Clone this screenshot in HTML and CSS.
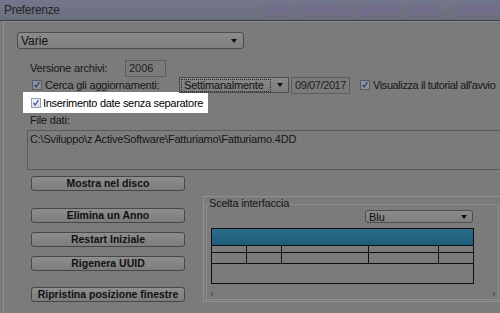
FILE: index.html
```html
<!DOCTYPE html>
<html lang="it">
<head>
<meta charset="utf-8">
<title>Preferenze</title>
<link rel="stylesheet" href="styles.css">
</head>
<body>
<div class="window">
  <div class="titlebar">
    <span class="title">Preferenze</span>
    <div class="blurs">
      <i class="blob b1"></i><i class="blob b2"></i><i class="blob b3"></i><i class="blob b4"></i><i class="blob b5"></i>
    </div>
  </div>
  <div class="panel">
    <div class="select select-main"><span>Varie</span><i class="caret"></i></div>

    <div class="row row-version">
      <span class="label label-version">Versione archivi:</span>
      <span class="field field-year">2006</span>
    </div>

    <div class="row row-update">
      <span class="check"><svg viewBox="0 0 10 10"><path d="M2 5 L4 7.5 L8 1.5" /></svg></span>
      <span class="label label-update">Cerca gli aggiornamenti:</span>
      <span class="combo"><span class="combo-text"><span class="focus">Settimanalmente</span></span><span class="combo-btn"><i class="caret"></i></span></span>
      <span class="field field-date">09/07/2017</span>
      <span class="check check-tutorial"><svg viewBox="0 0 10 10"><path d="M2 5 L4 7.5 L8 1.5" /></svg></span>
      <span class="label label-tutorial">Visualizza il tutorial all'avvio</span>
    </div>

    <div class="highlight">
      <span class="check check-on"><svg viewBox="0 0 10 10"><path d="M2 5 L4 7.5 L8 1.5" /></svg></span>
      <span class="label label-hl">Inserimento date senza separatore</span>
    </div>

    <div class="label file-label">File dati:</div>
    <div class="filebox">C:\Sviluppo\z ActiveSoftware\Fatturiamo\Fatturiamo.4DD</div>

    <div class="bottom">
      <div class="buttons">
        <div class="btn btn-show">Mostra nel disco</div>
        <div class="btn btn-del">Elimina un Anno</div>
        <div class="btn btn-restart">Restart Iniziale</div>
        <div class="btn btn-uuid">Rigenera UUID</div>
        <div class="btn btn-reset">Ripristina posizione finestre</div>
      </div>
      <div class="outer">
        <div class="group">
          <span class="group-title">Scelta interfaccia</span>
          <div class="select select-theme"><span>Blu</span><i class="caret"></i></div>
          <div class="preview">
            <div class="preview-head"></div>
            <div class="preview-row r1"><i></i><i></i><i></i><i></i><i></i></div>
            <div class="preview-row r2"><i></i><i></i><i></i><i></i><i></i></div>
            <div class="preview-body"></div>
          </div>
          <div class="scroll">
            <i class="arrow-left"></i><i class="arrow-right"></i>
          </div>
        </div>
      </div>
    </div>
  </div>
</div>
</body>
</html>
```
FILE: styles.css
```css
* { box-sizing: border-box; }

html, body {
  margin: 0;
  padding: 0;
}

body {
  width: 500px;
  height: 313px;
  overflow: hidden;
  background: #7b7b7b;
  font-family: "Liberation Sans", Arial, sans-serif;
  font-size: 11px;
  color: #161616;
}

.window {
  width: 500px;
  height: 313px;
  overflow: hidden;
}

/* title bar */
.titlebar {
  height: 21px;
  display: flex;
  align-items: center;
  padding-left: 4px;
  background: linear-gradient(#72768a, #6b6f7d);
  border-bottom: 1px solid #3e3f46;
}

.title {
  font-size: 12px;
  color: #262626;
  letter-spacing: -0.3px;
}

.blurs {
  display: flex;
  align-items: center;
  margin-left: 205px;
}

.blob {
  display: block;
  height: 7px;
  border-radius: 4px;
  background: #7a6696;
  filter: blur(2px);
  opacity: 0.6;
}
.b1 { width: 22px; }
.b2 { width: 48px; margin-left: 14px; }
.b3 { width: 42px; margin-left: 8px; }
.b4 { width: 28px; margin-left: 10px; }
.b5 { width: 50px; margin-left: 20px; }

/* panel */
.panel {
  margin-left: 3px;
  height: 292px;
  border-left: 1px solid #8f8f8f;
  border-top: 1px solid #8c8c8c;
}

.select {
  display: flex;
  align-items: center;
  justify-content: space-between;
  border: 1px solid #4d4d4d;
  border-radius: 3px;
  background: linear-gradient(#8b8b8b, #7f7f7f);
  padding: 0 6px 0 3px;
  color: #111;
}

.caret {
  display: block;
  width: 0;
  height: 0;
  border-left: 3.5px solid transparent;
  border-right: 3.5px solid transparent;
  border-top: 4px solid #111;
}

.select-main {
  margin: 10px 0 0 13px;
  width: 227px;
  height: 17px;
  font-size: 12px;
}

.row {
  display: flex;
  align-items: center;
  height: 16px;
}

.label {
  white-space: nowrap;
  letter-spacing: -0.2px;
}

.row-version {
  margin-top: 11px;
  padding-left: 26px;
}

.label-version { width: 95px; flex: none; }

.field {
  display: flex;
  align-items: center;
  height: 17px;
  border: 1px solid #5d5d5d;
  padding-left: 3px;
  color: #1e1e1e;
  flex: none;
  white-space: nowrap;
}

.field-year { width: 41px; }

.row-update {
  margin-top: 1px;
  padding-left: 28px;
}

.check {
  display: block;
  width: 10px;
  height: 10px;
  border: 1px solid #545a68;
  background: #8d9099;
  flex: none;
}
.check svg {
  display: block;
  width: 8px;
  height: 8px;
}
.check path {
  fill: none;
  stroke: #2d3f78;
  stroke-width: 1.6;
}

.label-update {
  margin-left: 3px;
  width: 134px;
  flex: none;
}

.combo {
  display: flex;
  width: 110px;
  height: 16px;
  border: 1px solid #4d4d4d;
  background: linear-gradient(#888, #7d7d7d);
  flex: none;
}
.combo-text {
  flex: 1;
  display: flex;
  align-items: center;
  padding-left: 1px;
}
.focus {
  display: block;
  width: 90px;
  border: 1px dotted #2b2b2b;
  line-height: 11px;
  padding-left: 2px;
  color: #111;
  letter-spacing: -0.2px;
}
.combo-btn {
  width: 17px;
  display: flex;
  align-items: center;
  justify-content: center;
}

.field-date {
  margin-left: 2px;
  width: 59px;
  padding-left: 3px;
  letter-spacing: -0.4px;
}

.check-tutorial { margin-left: 10px; }

.label-tutorial { margin-left: 3px; letter-spacing: -0.4px; }

.highlight {
  display: flex;
  align-items: center;
  margin: -1px 0 0 19px;
  width: 185px;
  height: 21px;
  background: #ffffff;
  padding-left: 8px;
  color: #000;
}

.check-on {
  border-color: #8fa0c4;
  background: linear-gradient(#f2f2f2, #dcdcdc);
}
.check-on path { stroke: #3a52b4; }

.label-hl { margin-left: 2px; letter-spacing: -0.3px; }

.file-label {
  margin-left: 26px;
  height: 17px;
  line-height: 15px;
}

.filebox {
  margin-left: 23px;
  width: 480px;
  height: 40px;
  border: 1px solid #5b5b5b;
  padding: 1px 2px;
  line-height: 14px;
  white-space: nowrap;
  letter-spacing: -0.2px;
}

/* bottom area */
.bottom {
  display: flex;
  align-items: flex-start;
}

.buttons {
  margin-left: 27px;
  padding-top: 6px;
  display: flex;
  flex-direction: column;
  width: 154px;
  flex: none;
}

.btn {
  height: 15px;
  border: 1px solid #474747;
  border-radius: 3px;
  background: linear-gradient(#8e8e8e, #7c7c7c);
  font-weight: bold;
  font-size: 10.5px;
  line-height: 13px;
  text-align: center;
  color: #111;
}
.btn-del { margin-top: 17px; }
.btn-restart { margin-top: 9px; }
.btn-uuid { margin-top: 9px; }
.btn-reset { margin-top: 16px; }

.outer {
  margin: 26px 0 0 18px;
  width: 300px;
  height: 106px;
  border: 1px solid #909090;
  flex: none;
}

.group {
  margin: 7px 0 0 2px;
  width: 293px;
  height: 96px;
  border: 1px solid #8c8c8c;
  display: flex;
  flex-direction: column;
  align-items: flex-start;
}

.group-title {
  display: block;
  margin: -8px 0 0 2px;
  padding: 0 1px 0 0;
  background: #7b7b7b;
  line-height: 13px;
  letter-spacing: -0.2px;
  white-space: nowrap;
}

.select-theme {
  margin-left: 158px;
  width: 108px;
  height: 13px;
  font-size: 11px;
  padding-right: 5px;
}

.preview {
  margin: 5px 0 0 4px;
  width: 263px;
  height: 56px;
  border: 1px solid #111;
}

.preview-head {
  height: 16px;
  background: linear-gradient(#2a6d8a, #1d5c78);
}

.preview-row {
  display: grid;
  grid-template-columns: 35px 35px 87px 70px 1fr;
  border-top: 1px solid #111;
}
.preview-row i { border-right: 1px solid #111; }
.preview-row i:last-child { border-right: none; }
.r1 { height: 7px; }
.r2 { height: 11px; }

.preview-body {
  height: 19px;
  border-top: 1px solid #111;
}

.scroll {
  margin-top: 6px;
  align-self: stretch;
  height: 7px;
  display: flex;
  justify-content: space-between;
  align-items: center;
  padding: 0 2px 0 3px;
}

.arrow-left, .arrow-right {
  display: block;
  width: 0;
  height: 0;
  border-top: 3px solid transparent;
  border-bottom: 3px solid transparent;
}
.arrow-left { border-right: 3px solid #5e5e5e; }
.arrow-right { border-left: 3px solid #5e5e5e; }
```
